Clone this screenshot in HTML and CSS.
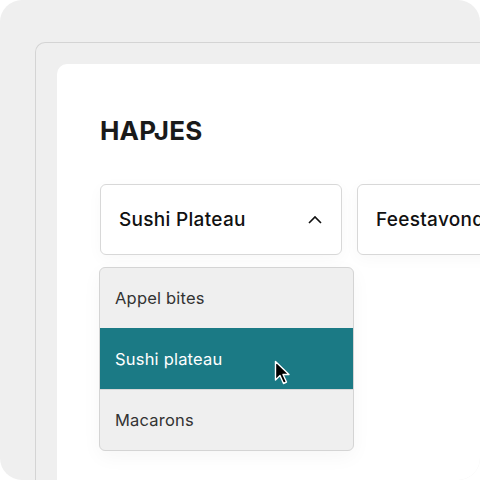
FILE: index.html
```html
<!DOCTYPE html>
<html lang="en">
<head>
  <meta charset="UTF-8">
  <title>Hapjes</title>
  <link rel="stylesheet" href="styles.css">
</head>
<body>

  <div class="device">
    <div class="frame">
      <div class="card">
        <h2 class="title">HAPJES</h2>

        <div class="selects">
          <div class="select-wrap">
            <div class="select open">
              <span>Sushi Plateau</span>
              <svg class="chevron" width="16" height="10" viewBox="0 0 16 10">
                <path d="M2 8 L8 2 L14 8" fill="none" stroke="#111" stroke-width="1.6"/>
              </svg>
            </div>

            <ul class="options">
              <li>Appel bites</li>
              <li class="active">
                Sushi plateau
                <svg class="cursor" width="18" height="26" viewBox="0 0 18 26">
                  <path d="M1.5 1.5 L1.5 20 L6 15.5 L9.5 23.5 L12.5 22 L9 14.5 L15 14.5 Z" fill="#000" stroke="#fff" stroke-width="1.4" stroke-linejoin="round"/>
                </svg>
              </li>
              <li>Macarons</li>
            </ul>
          </div>

          <div class="select">
            <span>Feestavond</span>
          </div>
        </div>
      </div>
    </div>
  </div>

</body>
</html>
```

FILE: styles.css
```css
body {
  margin: 0;
  background: #fff;
  font-family: Inter, "Liberation Sans", sans-serif;
}

.device {
  width: 480px;
  height: 480px;
  box-sizing: border-box;
  background: #efefef;
  border-radius: 22px;
  overflow: hidden;
  padding: 42px 0 0 35px;
}

.frame {
  height: 100%;
  box-sizing: border-box;
  border-top: 1px solid #d4d4d4;
  border-left: 1px solid #d4d4d4;
  border-radius: 10px 0 0 0;
  padding: 21px 0 0 21px;
}

.card {
  height: 100%;
  box-sizing: border-box;
  background: #fff;
  border-radius: 10px 0 0 0;
  padding: 47px 0 0 43px;
  overflow: hidden;
}

.title {
  margin: 0 0 33px;
  font-size: 26px;
  line-height: 40px;
  font-weight: 700;
  color: #1a1a1a;
  letter-spacing: 0.2px;
}

.selects {
  display: flex;
  gap: 15px;
  align-items: flex-start;
}

.select-wrap {
  width: 242px;
  flex-shrink: 0;
}

.select {
  width: 242px;
  height: 71px;
  flex-shrink: 0;
  box-sizing: border-box;
  border: 1px solid #d8d8d8;
  border-radius: 6px;
  background: #fff;
  display: flex;
  align-items: center;
  justify-content: space-between;
  padding: 0 18px 0 18px;
  font-size: 19px;
  font-weight: 500;
  letter-spacing: 0.3px;
  color: #111;
  box-shadow: 0 4px 16px rgba(0, 0, 0, 0.03);
}

.options {
  list-style: none;
  margin: 12px 0 0 -1px;
  padding: 0;
  width: 255px;
  box-sizing: border-box;
  background: #efefef;
  border: 1px solid #d4d4d4;
  border-radius: 6px;
  overflow: hidden;
  box-shadow: 0 6px 20px rgba(0, 0, 0, 0.04);
}

.options li {
  position: relative;
  height: 60px;
  display: flex;
  align-items: center;
  padding-left: 15px;
  font-size: 16.5px;
  letter-spacing: 0.2px;
  color: #333;
  border-top: 1px solid #d8d8d8;
}

.options li:first-child {
  border-top: none;
}

.options li.active {
  background: #1b7a85;
  color: #fff;
  border-top-color: #1b7a85;
}

.cursor {
  position: absolute;
  left: 174px;
  top: 31px;
}
```
